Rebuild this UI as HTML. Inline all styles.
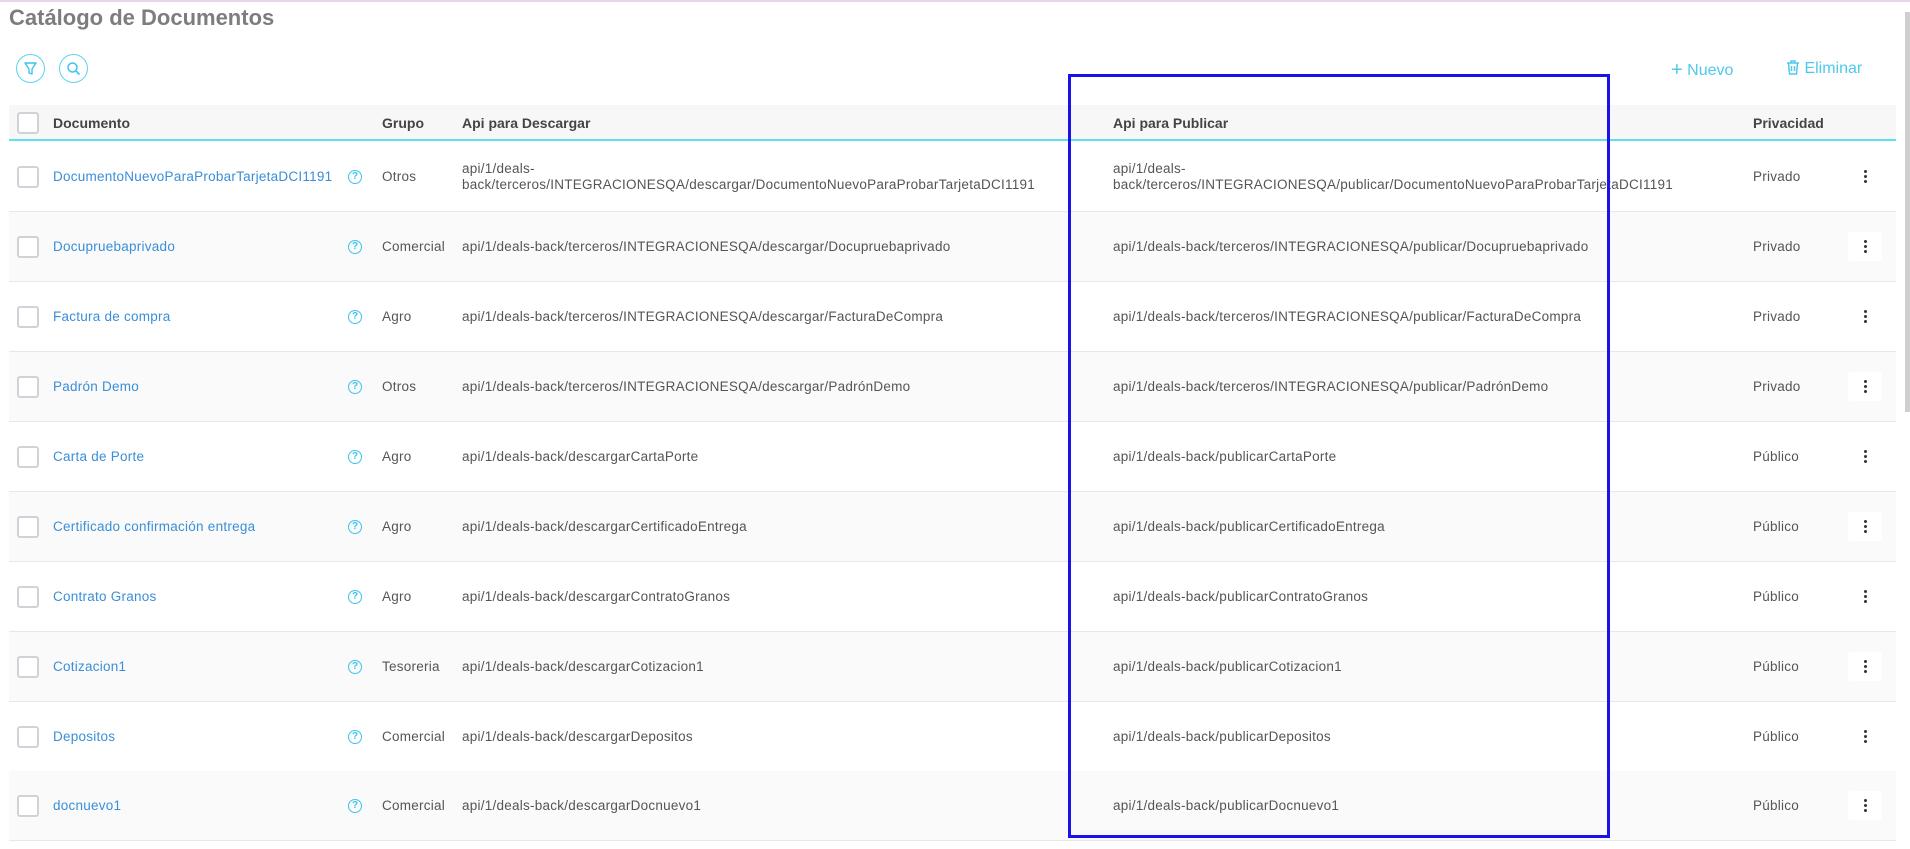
<!DOCTYPE html>
<html><head><meta charset="utf-8"><style>
*{margin:0;padding:0;box-sizing:border-box}
body{width:1910px;height:849px;overflow:hidden;background:#fff;font-family:"Liberation Sans",sans-serif;position:relative;color:#555}
.top{position:absolute;left:0;top:0;width:1910px;height:2px;background:#e6d6ea}
h1{position:absolute;left:9px;top:5px;font-size:22px;font-weight:bold;color:#7d7d7d}
.circ{position:absolute;top:54px;width:29px;height:29px;border:1px solid #5fd3f0;border-radius:50%}
.act{position:absolute;top:58px;font-size:16px;color:#4fc8ee}
.sb{position:absolute;left:1905px;top:12px;width:5px;height:400px;background:#cfcfcf}
.hdr{position:absolute;left:9px;top:105px;width:1887px;height:36px;background:#f7f7f7;border-bottom:2px solid #5fe0ef}
.row{position:absolute;left:9px;width:1887px;height:70px;border-bottom:1px solid #e8e8e8}
.row.e{background:#fafafa}
.cb{position:absolute;left:8px;width:22px;height:22px;border:2px solid #cfd3d8;border-radius:3px;background:#fff}
.t{position:absolute;font-size:13.5px;white-space:nowrap;line-height:16px;letter-spacing:0.25px}
.h{font-weight:bold;color:#444;font-size:14px;letter-spacing:0}
.lk{color:#3a8ed8}
.q{position:absolute;left:339px;width:14px;height:14px;border:1.5px solid #3cc3ee;border-radius:50%;color:#3cc3ee;font-size:10px;font-weight:bold;text-align:center;line-height:11px}
.dots{position:absolute;left:1839px;width:34px;height:29px;border-radius:3px}
.row.e .dots{background:#fff}
.dots i{position:absolute;left:16px;width:3px;height:3px;background:#333;border-radius:50%}
.box{position:absolute;left:1068px;top:74px;width:542px;height:764px;border:3px solid #1a13e8}
</style></head><body>
<div class="top"></div>
<h1>Catálogo de Documentos</h1>
<div class="circ" style="left:16px"><svg width="27" height="27" viewBox="0 0 27 27"><path d="M8 8h11l-4 6v5l-3-1v-4z" fill="none" stroke="#3cc3ee" stroke-width="1.4" stroke-linejoin="round"/></svg></div>
<div class="circ" style="left:59px"><svg width="27" height="27" viewBox="0 0 27 27"><circle cx="12.5" cy="12.5" r="4.5" fill="none" stroke="#3cc3ee" stroke-width="1.5"/><path d="M16 16l3.5 3.5" stroke="#3cc3ee" stroke-width="1.6"/></svg></div>
<div class="act" style="left:1671px"><span style="font-size:20px;position:relative;top:1px">+</span> Nuevo</div>
<div class="act" style="left:1786px"><svg width="14" height="15" viewBox="0 0 14 15" style="position:relative;top:2px"><path d="M1 3h12M5 3V1h4v2M2.5 3l1 11h7l1-11M5.5 6v5M8.5 6v5" fill="none" stroke="#4fc8ee" stroke-width="1.5"/></svg> Eliminar</div>
<div class="sb"></div>
<div class="hdr">
<div class="cb" style="top:7px"></div>
<div class="t h" style="left:44px;top:10px">Documento</div>
<div class="t h" style="left:373px;top:10px">Grupo</div>
<div class="t h" style="left:453px;top:10px">Api para Descargar</div>
<div class="t h" style="left:1104px;top:10px">Api para Publicar</div>
<div class="t h" style="left:1744px;top:10px">Privacidad</div>
</div>
<div class="row" style="top:142px"><div class="cb" style="top:24px"></div><div class="t lk" style="left:44px;top:27px">DocumentoNuevoParaProbarTarjetaDCI1191</div><div class="q" style="top:28px">?</div><div class="t" style="left:373px;top:27px">Otros</div><div class="t" style="left:453px;top:19px">api/1/deals-<br>back/terceros/INTEGRACIONESQA/descargar/DocumentoNuevoParaProbarTarjetaDCI1191</div><div class="t" style="left:1104px;top:19px">api/1/deals-<br>back/terceros/INTEGRACIONESQA/publicar/DocumentoNuevoParaProbarTarjetaDCI1191</div><div class="t" style="left:1744px;top:27px">Privado</div><div class="dots" style="top:20px"><i style="top:8px"></i><i style="top:13px"></i><i style="top:18px"></i></div></div>
<div class="row e" style="top:212px"><div class="cb" style="top:24px"></div><div class="t lk" style="left:44px;top:27px">Docupruebaprivado</div><div class="q" style="top:28px">?</div><div class="t" style="left:373px;top:27px">Comercial</div><div class="t" style="left:453px;top:27px">api/1/deals-back/terceros/INTEGRACIONESQA/descargar/Docupruebaprivado</div><div class="t" style="left:1104px;top:27px">api/1/deals-back/terceros/INTEGRACIONESQA/publicar/Docupruebaprivado</div><div class="t" style="left:1744px;top:27px">Privado</div><div class="dots" style="top:20px"><i style="top:8px"></i><i style="top:13px"></i><i style="top:18px"></i></div></div>
<div class="row" style="top:282px"><div class="cb" style="top:24px"></div><div class="t lk" style="left:44px;top:27px">Factura de compra</div><div class="q" style="top:28px">?</div><div class="t" style="left:373px;top:27px">Agro</div><div class="t" style="left:453px;top:27px">api/1/deals-back/terceros/INTEGRACIONESQA/descargar/FacturaDeCompra</div><div class="t" style="left:1104px;top:27px">api/1/deals-back/terceros/INTEGRACIONESQA/publicar/FacturaDeCompra</div><div class="t" style="left:1744px;top:27px">Privado</div><div class="dots" style="top:20px"><i style="top:8px"></i><i style="top:13px"></i><i style="top:18px"></i></div></div>
<div class="row e" style="top:352px"><div class="cb" style="top:24px"></div><div class="t lk" style="left:44px;top:27px">Padrón Demo</div><div class="q" style="top:28px">?</div><div class="t" style="left:373px;top:27px">Otros</div><div class="t" style="left:453px;top:27px">api/1/deals-back/terceros/INTEGRACIONESQA/descargar/PadrónDemo</div><div class="t" style="left:1104px;top:27px">api/1/deals-back/terceros/INTEGRACIONESQA/publicar/PadrónDemo</div><div class="t" style="left:1744px;top:27px">Privado</div><div class="dots" style="top:20px"><i style="top:8px"></i><i style="top:13px"></i><i style="top:18px"></i></div></div>
<div class="row" style="top:422px"><div class="cb" style="top:24px"></div><div class="t lk" style="left:44px;top:27px">Carta de Porte</div><div class="q" style="top:28px">?</div><div class="t" style="left:373px;top:27px">Agro</div><div class="t" style="left:453px;top:27px">api/1/deals-back/descargarCartaPorte</div><div class="t" style="left:1104px;top:27px">api/1/deals-back/publicarCartaPorte</div><div class="t" style="left:1744px;top:27px">Público</div><div class="dots" style="top:20px"><i style="top:8px"></i><i style="top:13px"></i><i style="top:18px"></i></div></div>
<div class="row e" style="top:492px"><div class="cb" style="top:24px"></div><div class="t lk" style="left:44px;top:27px">Certificado confirmación entrega</div><div class="q" style="top:28px">?</div><div class="t" style="left:373px;top:27px">Agro</div><div class="t" style="left:453px;top:27px">api/1/deals-back/descargarCertificadoEntrega</div><div class="t" style="left:1104px;top:27px">api/1/deals-back/publicarCertificadoEntrega</div><div class="t" style="left:1744px;top:27px">Público</div><div class="dots" style="top:20px"><i style="top:8px"></i><i style="top:13px"></i><i style="top:18px"></i></div></div>
<div class="row" style="top:562px"><div class="cb" style="top:24px"></div><div class="t lk" style="left:44px;top:27px">Contrato Granos</div><div class="q" style="top:28px">?</div><div class="t" style="left:373px;top:27px">Agro</div><div class="t" style="left:453px;top:27px">api/1/deals-back/descargarContratoGranos</div><div class="t" style="left:1104px;top:27px">api/1/deals-back/publicarContratoGranos</div><div class="t" style="left:1744px;top:27px">Público</div><div class="dots" style="top:20px"><i style="top:8px"></i><i style="top:13px"></i><i style="top:18px"></i></div></div>
<div class="row e" style="top:632px"><div class="cb" style="top:24px"></div><div class="t lk" style="left:44px;top:27px">Cotizacion1</div><div class="q" style="top:28px">?</div><div class="t" style="left:373px;top:27px">Tesoreria</div><div class="t" style="left:453px;top:27px">api/1/deals-back/descargarCotizacion1</div><div class="t" style="left:1104px;top:27px">api/1/deals-back/publicarCotizacion1</div><div class="t" style="left:1744px;top:27px">Público</div><div class="dots" style="top:20px"><i style="top:8px"></i><i style="top:13px"></i><i style="top:18px"></i></div></div>
<div class="row" style="top:702px"><div class="cb" style="top:24px"></div><div class="t lk" style="left:44px;top:27px">Depositos</div><div class="q" style="top:28px">?</div><div class="t" style="left:373px;top:27px">Comercial</div><div class="t" style="left:453px;top:27px">api/1/deals-back/descargarDepositos</div><div class="t" style="left:1104px;top:27px">api/1/deals-back/publicarDepositos</div><div class="t" style="left:1744px;top:27px">Público</div><div class="dots" style="top:20px"><i style="top:8px"></i><i style="top:13px"></i><i style="top:18px"></i></div></div>
<div class="row e" style="top:771px"><div class="cb" style="top:24px"></div><div class="t lk" style="left:44px;top:27px">docnuevo1</div><div class="q" style="top:28px">?</div><div class="t" style="left:373px;top:27px">Comercial</div><div class="t" style="left:453px;top:27px">api/1/deals-back/descargarDocnuevo1</div><div class="t" style="left:1104px;top:27px">api/1/deals-back/publicarDocnuevo1</div><div class="t" style="left:1744px;top:27px">Público</div><div class="dots" style="top:20px"><i style="top:8px"></i><i style="top:13px"></i><i style="top:18px"></i></div></div>
<div class="box"></div>
</body></html>
